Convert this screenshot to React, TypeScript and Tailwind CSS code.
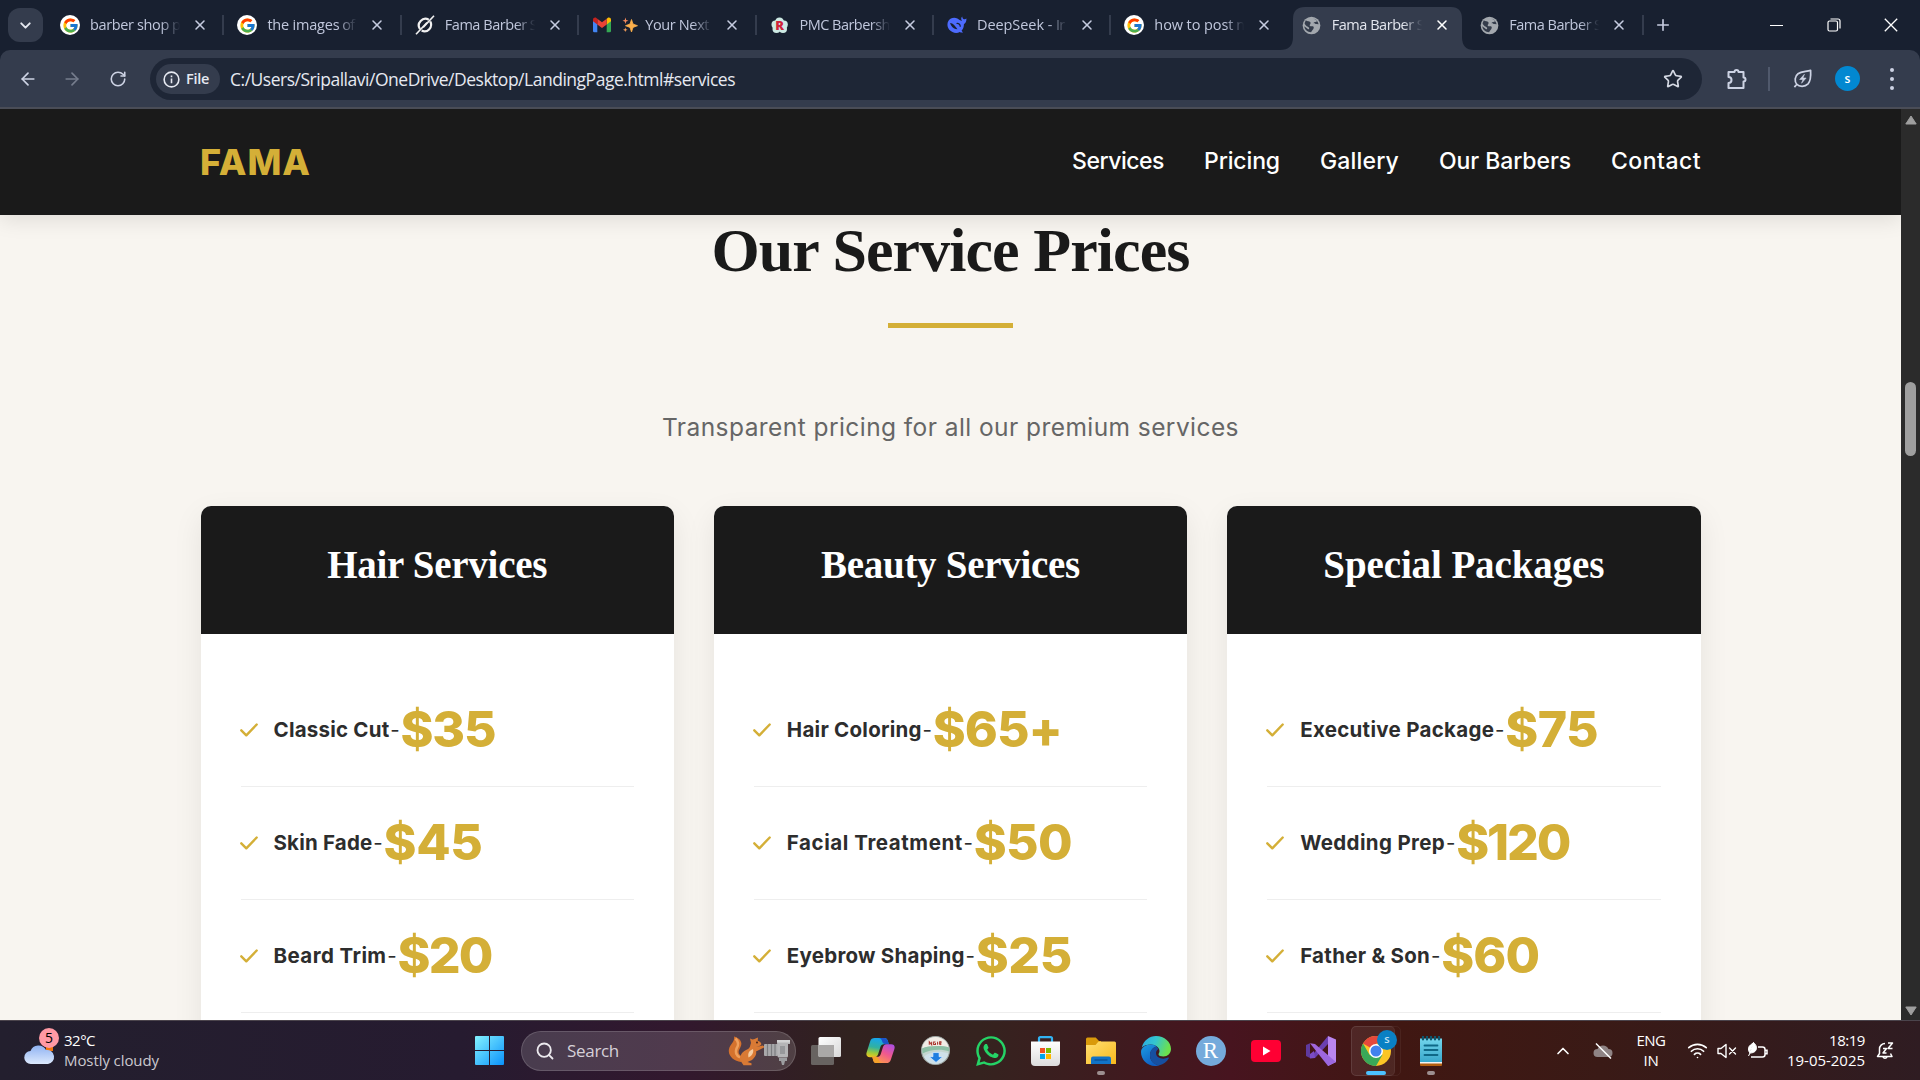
import React, { useLayoutEffect, useRef, useState } from "react";
import { FcGoogle } from "react-icons/fc";
import { FaWhatsapp } from "react-icons/fa";
import { Search, X, Plus, Star, ArrowLeft, ArrowRight, RotateCw, ChevronDown, ChevronUp, Wifi } from "lucide-react";

/** Spaces the letters of a line so that it measures `w` pixels. */
function Fit({ w, className = "", children }: { w: number; className?: string; children: string }) {
  const ref = useRef<HTMLSpanElement>(null);
  const [gap, setGap] = useState(0);
  useLayoutEffect(() => {
    const el = ref.current;
    if (!el) return;
    el.style.letterSpacing = "0px";
    const spacing = (w - el.getBoundingClientRect().width) / children.length;
    el.style.letterSpacing = `${spacing}px`;
    setGap(spacing);
  }, [w, children]);
  return (
    <span ref={ref} className={`inline-block whitespace-pre ${className}`} style={{ letterSpacing: `${gap}px` }}>
      {children}
    </span>
  );
}

/* ---------- favicons ---------- */
const GoogleIcon = () => (
  <span className="flex h-5 w-5 items-center justify-center rounded-full bg-white">
    <FcGoogle size={17} />
  </span>
);
const SlashIcon = () => (
  <svg viewBox="0 0 20 20" className="h-5 w-5" fill="none" stroke="#f1f1f1">
    <path d="M13.8 4.8A6.6 6.6 0 0 0 5 14.2M6.6 15.6A6.6 6.6 0 0 0 15.2 6.4" strokeWidth="2.2" />
    <path d="M19 .8 8.2 12.4" strokeWidth="1.6" />
    <path d="M1 19.3 12 7.6" strokeWidth="1.6" />
  </svg>
);
const GmailIcon = () => (
  <svg viewBox="0 0 20 16" className="h-4 w-5">
    <path d="M1 3v11a1.3 1.3 0 0 0 1.3 1.3h3V6.5z" fill="#4285f4" />
    <path d="M14.7 15.3h3A1.3 1.3 0 0 0 19 14V3l-4.3 3.5z" fill="#34a853" />
    <path d="M14.7 1.8v5.6L19 4.2V2.6C19 .9 17-.1 15.6 1z" fill="#fbbc04" />
    <path d="M5.3 7.4V1.8L10 5.3l4.7-3.5v5.6L10 11z" fill="#ea4335" />
    <path d="M1 2.6v1.6l4.3 3.2V1.8L4.4 1C3-.1 1 .9 1 2.6z" fill="#c5221f" />
  </svg>
);
const RIcon = () => (
  <span className="relative flex h-[17px] w-[17px] items-center justify-center text-[13px] leading-none font-extrabold text-[#d0243a]">
    <svg viewBox="0 0 17 17" className="absolute inset-0 h-[17px] w-[17px]" fill="#cdeae4">
      <circle cx="8.500" cy="5" r="4.500" />
      <circle cx="4.500" cy="7.500" r="4" />
      <circle cx="12.800" cy="7.500" r="4" />
      <circle cx="5.500" cy="12" r="4" />
      <circle cx="12" cy="12" r="4" />
    </svg>
    <span className="relative">R</span>
  </span>
);
const WhaleIcon = () => (
  <svg viewBox="0 0 20 18" className="h-[18px] w-5" fill="#4d6bfe">
    <path d="M19.4 2.6c-1 .9-2 .9-3 .5-.8-.6-1-1.400-1.200-2.500-1.300 1.300-1.300 2.800-.2 4.500-1.700-.3-3-1.600-4.600-2.500C6.800.9 3.200 2.400 1.500 4.700-.2 7.400.2 11.200 2.300 13.800c2.800 3.200 7.400 3.900 10.500 2.200 1 .6 2.200.7 3.300.4-.8-.5-1.300-1-1.500-1.800 1.700-1.900 2.300-4 2.300-6.400 1.800-1.100 2.700-3 2.500-5.600z" />
    <path d="M3 7c3.200.2 5.200 3 7.400 6.200l-1.800-.2C6 12.300 4.200 10.500 3 7z" fill="#182030" />
    <path d="M9.500 7.500c2-.6 3.800.9 3.800 3.200" stroke="#182030" strokeWidth="1.200" fill="none" />
  </svg>
);
const GlobeIcon = () => (
  <svg viewBox="0 0 20 20" className="h-[19px] w-[19px]">
    <circle cx="10" cy="10" r="9.300" fill="#a3a8ae" />
    <path d="M4 4.500C6 6 8.500 5 9 7c.3 1.700-1.500 2-.8 3.200.8 1.200 3-.2 4 1.200.8 1.300-.6 2.800-2.700 5.600C6 17 2.800 14.500 2.400 10.800L6.500 14c1.400.3 1.500-2-.3-2.700C4.500 10.500 3 9 2.700 7.500zM11.500 2.500c1.700.3 3.400 1.400 4.400 2.700-1 1.300-3 .6-3.600 2-.3 1 1.500 1.300 3 1.200l2.200.4c-.6-3.500-3-6-6-6.300z" fill="#343c4b" />
  </svg>
);
const Sparkles = () => (
  <svg viewBox="0 0 16 16" className="mr-[7px] h-4 w-4 shrink-0">
    <path d="M9.500 2.500 11 7l4.500 1.700L11 10.400 9.500 15 8 10.400 3.500 8.700 8 7z" fill="#fdb04b" stroke="#fdb04b" strokeWidth=".8" />
    <path d="M3.500.5 4.200 3l2.300.8-2.300.8-.7 2.400-.8-2.400L.5 3.800 2.700 3z" fill="#f78b5c" />
    <path d="m3.300 10.500.6 1.700 1.700.6-1.700.6-.6 1.700-.6-1.700-1.700-.6 1.700-.6z" fill="#f9a05a" />
  </svg>
);

/* ---------- tab strip ---------- */
type TabData = { icon: React.ReactNode; text: string; w: number; rest: string; active?: boolean; sparkle?: boolean; sep?: boolean };
const tabs: TabData[] = [
  { icon: <GoogleIcon />, text: "barber shop", w: 79, rest: " p", sep: true },
  { icon: <GoogleIcon />, text: "the images", w: 72, rest: " of", sep: true },
  { icon: <SlashIcon />, text: "Fama Barber", w: 82, rest: " S", sep: true },
  { icon: <GmailIcon />, text: "Your Next", w: 64, rest: "", sparkle: true, sep: true },
  { icon: <RIcon />, text: "PMC Barbers", w: 82, rest: "h", sep: true },
  { icon: <WhaleIcon />, text: "DeepSeek - ", w: 79, rest: "Ir", sep: true },
  { icon: <GoogleIcon />, text: "how to post", w: 79, rest: " n" },
  { icon: <GlobeIcon />, text: "Fama Barber", w: 82, rest: " S", active: true },
  { icon: <GlobeIcon />, text: "Fama Barber", w: 82, rest: " S", sep: true },
];

function Tab({ t }: { t: TabData }) {
  return (
    <div className="relative flex h-full w-[177.4px] shrink-0 items-center">
      {t.active && (
        <svg viewBox="0 0 194 43" className="absolute bottom-0 -left-[9px] h-[43px] w-[194px]">
          <path d="M0 43Q13 43 13 30V12Q13 0 25 0H171Q182 0 182 12V30Q182 43 194 43Z" fill="#343c4d" />
        </svg>
      )}
      <div className="relative ml-[13px] flex w-5 justify-center">{t.icon}</div>
      <div
        className={`relative ml-[10px] flex w-[93px] items-center text-[14.500px] whitespace-pre [mask-image:linear-gradient(to_right,black_76%,transparent_97%)] ${t.active ? "text-[#e3e6ee]" : "text-[#c0c7dc]"}`}
      >
        {t.sparkle && <Sparkles />}
        <Fit w={t.w} className="shrink-0">{t.text}</Fit>
        {t.rest && <span className="tracking-[-0.800px]">{t.rest}</span>}
      </div>
      <X size={16} strokeWidth={2.300} className={`relative ml-[9px] ${t.active ? "text-white" : "text-[#c6cce0]"}`} />
      {t.sep && <div className="ml-auto h-5 w-[2px] bg-[#343c4d]" />}
    </div>
  );
}

function TabStrip() {
  return (
    <div className="flex h-[50px] items-center bg-[#182030]">
      <div className="ml-2 flex h-[34px] w-[35px] items-center justify-center rounded-[12px] bg-[#343c4d] text-[#e4e7ef]">
        <ChevronDown size={17} strokeWidth={2.700} />
      </div>
      <div className="ml-1 flex h-full">
        {tabs.map((t, i) => (
          <Tab key={i} t={t} />
        ))}
      </div>
      <Plus size={18} strokeWidth={2.200} className="ml-[10px] text-[#c6cce0]" />
      <div className="mr-[1px] ml-auto flex items-center text-white">
        <div className="flex w-[57px] justify-center">
          <div className="h-[1px] w-[13px] bg-white" />
        </div>
        <div className="flex w-[57px] justify-center">
          <svg viewBox="0 0 14 14" className="h-[14px] w-[14px]" fill="none" stroke="#fff" strokeWidth="1.200">
            <rect x="1" y="3" width="9.500" height="10" rx="1.500" />
            <path d="M3.500 1h7.500a2 2 0 0 1 2 2v7.500" />
          </svg>
        </div>
        <div className="flex w-[57px] justify-center">
          <svg viewBox="0 0 14 14" className="h-[14px] w-[14px]" stroke="#fff" strokeWidth="1.300">
            <path d="m.8.8 12.400 12.400M13.200.8.8 13.200" />
          </svg>
        </div>
      </div>
    </div>
  );
}

function Toolbar() {
  return (
    <div className="h-[59px] bg-[#182030]">
      <div className="flex h-full items-center rounded-t-[10px] border-b-2 border-[#4a4d57] bg-[#343c4d] text-[#cdd3e4]">
        <ArrowLeft size={20} className="ml-[18px]" strokeWidth={2} />
        <ArrowRight size={20} className="ml-[24px] text-[#767d8d]" strokeWidth={2} />
        <RotateCw size={18} className="ml-[27px]" strokeWidth={2.100} />
        <div className="mt-[1px] ml-[23px] flex h-[42px] w-[1552px] items-center rounded-full bg-[#1e2636] pl-[6px]">
          <div className="flex h-[30px] w-[64px] items-center rounded-full bg-[#343c4d] pl-[7px] text-[#e6e9f1]">
            <svg viewBox="0 0 18 18" className="h-[17px] w-[17px]" fill="none" stroke="currentColor" strokeWidth="1.700">
              <circle cx="9" cy="9" r="7.800" />
              <path d="M9 8v5M9 4.800v1.800" />
            </svg>
            <Fit w={23} className="ml-[6px] text-[14.500px] font-semibold">File</Fit>
          </div>
          <Fit w={505} className="ml-[10px] text-[17.500px] text-[#e6e9f1]">C:/Users/Sripallavi/OneDrive/Desktop/LandingPage.html#services</Fit>
          <Star size={20} className="mr-[19px] ml-auto text-[#d5d9e4]" strokeWidth={2} />
        </div>
        <svg viewBox="0 0 22 22" className="ml-[24px] h-[22px] w-[22px]" fill="none" stroke="currentColor" strokeWidth="2" strokeLinejoin="round">
          <path d="M2.500 4H8.500a2 2 0 0 1 4 0H17.500V9.500a2 2 0 0 1 0 4V20H2.500V15a3 3 0 0 0 0-6z" />
        </svg>
        <div className="ml-[20px] h-[24px] w-[2px] bg-[#50596c]" />
        <svg viewBox="0 0 22 22" className="ml-[22px] h-[21px] w-[21px]" fill="none" stroke="currentColor" strokeWidth="1.800" strokeLinejoin="round">
          <path d="M19.500 2.500c.4 7 .2 11-2.700 14.200-3.300 3.400-9.300 3.200-11.800.3C2.400 13.900 2.800 8.600 6.300 6 10 3.200 14.500 4 19.500 2.500zM5.300 16.700 2.500 20" />
          <path d="M13 6.500 8 12h3.500l-1.500 4 4.800-5.500h-3.300z" fill="currentColor" strokeWidth=".6" />
        </svg>
        <div className="ml-[22px] flex h-[25px] w-[25px] items-center justify-center rounded-full bg-[#0288d1] text-[12px] font-semibold text-white">s</div>
        <div className="ml-[30px] flex flex-col gap-[5px]">
          <div className="h-[4px] w-[4px] rounded-full bg-[#cdd3e4]" />
          <div className="h-[4px] w-[4px] rounded-full bg-[#cdd3e4]" />
          <div className="h-[4px] w-[4px] rounded-full bg-[#cdd3e4]" />
        </div>
      </div>
    </div>
  );
}

/* ---------- page ---------- */
const cards = [
  {
    title: "Hair Services", tw: 220,
    items: [
      { name: "Classic Cut", w: 116, price: "$35", pw: 95 },
      { name: "Skin Fade", w: 99, price: "$45", pw: 99 },
      { name: "Beard Trim", w: 113, price: "$20", pw: 94 },
    ],
  },
  {
    title: "Beauty Services", tw: 259,
    items: [
      { name: "Hair Coloring", w: 135, price: "$65+", pw: 129 },
      { name: "Facial Treatment", w: 176, price: "$50", pw: 98 },
      { name: "Eyebrow Shaping", w: 178, price: "$25", pw: 96 },
    ],
  },
  {
    title: "Special Packages", tw: 281,
    items: [
      { name: "Executive Package", w: 194, price: "$75", pw: 93 },
      { name: "Wedding Prep", w: 145, price: "$120", pw: 113 },
      { name: "Father & Son", w: 130, price: "$60", pw: 98 },
    ],
  },
];
const nav = [
  { text: "Services", w: 92 },
  { text: "Pricing", w: 76 },
  { text: "Gallery", w: 79 },
  { text: "Our Barbers", w: 132 },
  { text: "Contact", w: 90 },
];

function Page() {
  return (
    <div className="flex h-[911px] overflow-hidden">
      <div className="flex w-[1901px] flex-col overflow-hidden bg-[#f8f5f0] font-['Inter',sans-serif]">
        <header className="z-10 flex h-[106px] shrink-0 items-center justify-between bg-[#1a1a1a] pr-[200px] pl-[200px] shadow-[0_5px_20px_rgba(0,0,0,0.1)]">
          <Fit w={111} className="text-[36px] font-extrabold text-[#d4af37]">FAMA</Fit>
          <nav className="-mt-[2px] flex gap-[40px] text-[23px] font-medium text-white">
            {nav.map((n) => (
              <Fit key={n.text} w={n.w}>{n.text}</Fit>
            ))}
          </nav>
        </header>
        <div className="flex h-[290px] shrink-0 flex-col items-center">
          <h2 className="mt-[3px] font-['Liberation_Serif',serif] text-[62px] leading-[64px] font-bold text-[#1a1a1a]">
            <Fit w={478}>Our Service Prices</Fit>
          </h2>
          <div className="mt-[41px] h-[5px] w-[125px] bg-[#d4af37]" />
          <p className="mt-[81px] text-[24.500px] leading-[36px] text-[#666]">
            <Fit w={577}>Transparent pricing for all our premium services</Fit>
          </p>
        </div>
        <div className="grid h-[700px] shrink-0 grid-cols-3 gap-[40px] px-[200.5px]">
          {cards.map((c) => (
            <div key={c.title} className="mt-[1px] overflow-hidden rounded-[10px] bg-white shadow-[0_10px_30px_rgba(0,0,0,0.08)]">
              <div className="flex h-[128px] items-start justify-center bg-[#1a1a1a] pt-[36px] font-['Liberation_Serif',serif] text-[39px] leading-[46px] font-bold text-white">
                <Fit w={c.tw}>{c.title}</Fit>
              </div>
              <ul className="px-[40px] pt-[40px] text-[20.500px] text-[#2d2d2d]">
                {c.items.map((it) => (
                  <li key={it.name} className="flex h-[113px] items-center border-b border-[#eee]">
                    <div className="w-[33px] shrink-0">
                      <svg viewBox="0 0 18 14" className="-ml-[1px] h-[14px] w-[18px]" fill="none" stroke="#d4af37" strokeWidth="2.400" strokeLinecap="round" strokeLinejoin="round">
                        <path d="m1.300 7.300 5 5L16.700 1.500" />
                      </svg>
                    </div>
                    <Fit w={it.w} className="font-bold">{it.name}</Fit>
                    <span className="w-[11px] text-center">-</span>
                    <Fit w={it.pw} className="-mt-[2px] text-[50px] font-extrabold text-[#d4af37]">{it.price}</Fit>
                  </li>
                ))}
              </ul>
            </div>
          ))}
        </div>
      </div>
      <div className="flex w-[19px] flex-col items-center bg-[#2b2b2b]">
        <svg viewBox="0 0 12 10" className="mt-[6px] h-[10px] w-[12px]"><path d="M6 1 11.200 9H.8z" fill="#9f9f9f" stroke="#9f9f9f" strokeLinejoin="round" /></svg>
        <div className="mt-[257px] h-[74px] w-[11px] rounded-full bg-[#9f9f9f]" />
        <svg viewBox="0 0 12 10" className="mt-auto mb-[4px] h-[10px] w-[12px]"><path d="M6 9 .8 1h10.400z" fill="#9f9f9f" stroke="#9f9f9f" strokeLinejoin="round" /></svg>
      </div>
    </div>
  );
}

/* ---------- taskbar icons ---------- */
const WindowsLogo = () => (
  <svg viewBox="0 0 29 29" className="h-[29px] w-[29px]">
    <defs>
      <linearGradient id="win" x1="0" y1="0" x2="1" y2="1"><stop offset="0" stopColor="#84f2ff" /><stop offset="1" stopColor="#0a92fb" /></linearGradient>
    </defs>
    <path d="M1 0h13v14H0V1a1 1 0 0 1 1-1zM15 0h13a1 1 0 0 1 1 1v13H15zM0 15h14v14H1a1 1 0 0 1-1-1zM15 15h14v13a1 1 0 0 1-1 1H15z" fill="url(#win)" />
  </svg>
);
const Squirrel = () => (
  <svg viewBox="0 0 62 32" className="h-[32px] w-[62px]">
    <path d="M13 27C6 26-.5 21 1 14c1-5 6-7 5-12.500 6 1.500 9 6 6.500 10.500-2 4-3.500 6 1.500 10z" fill="#d5722d" />
    <path d="M7.500 3.500c3.500 3.500 3 7 1 10-1.500 4-.5 7 3.500 9" stroke="#f0a05c" strokeWidth="2.500" fill="none" />
    <path d="M12 25c-.5-5 3-9 7-10.500 3.500-1.500 3-4 4-6.500l-1-4.500L24.500 4.500l2-.5L30 2.500l-.3 3.200c2.500.8 4 2.300 3.500 3.800-.8 1.600-3 1.600-5 2.500l6.500-1.500 2.300 1.500-9 4.500c1 3-1 6-4 8.500l-4.500 2 4 1.200v2h-8z" fill="#d97a35" />
    <path d="M25 14c1 3.500-1 7-4.500 8.500-1-4 .5-7 4.500-8.500z" fill="#f5cda2" />
    <circle cx="29" cy="7.500" r=".9" fill="#3a1c10" />
    <rect x="36" y="9" width="14" height="12" rx="1" fill="#a9a9ab" />
    <path d="M39.500 9v12M43.500 9v12M47 9v12" stroke="#7c7d80" strokeWidth="1.200" />
    <path d="M49 5h12a1 1 0 0 1 1 1v3h-2v12a1.500 1.500 0 0 1-1.500 1.500H51A1.500 1.500 0 0 1 49.500 21z" fill="#b5b5b7" />
    <path d="M49 5h13v2.500H49z" fill="#d2d2d3" />
    <path d="M52 11h5v8h-5z" fill="#97989b" />
    <path d="M51 23h8v3h-2l-1 4h-2l-1-4h-2z" fill="#9c9da0" />
  </svg>
);
const TaskView = () => (
  <svg viewBox="0 0 30 28" className="h-[28px] w-[30px]">
    <defs><linearGradient id="tv" x1="0" y1="0" x2="1" y2="1"><stop offset="0" stopColor="#fff" /><stop offset="1" stopColor="#d8d8d8" /></linearGradient></defs>
    <rect y="8" width="23" height="20" rx="1.500" fill="#686361" />
    <rect x="7.500" width="22.500" height="20" rx="1.500" fill="url(#tv)" />
    <path d="M7.500 8H23v12H9a1.500 1.500 0 0 1-1.500-1.500z" fill="#aaa8a7" />
  </svg>
);
const Copilot = () => (
  <svg viewBox="0 0 30 28" className="h-[27px] w-[29px]">
    <defs>
      <linearGradient id="cpa" x1=".3" y1="0" x2=".1" y2="1"><stop offset="0" stopColor="#17a6ea" /><stop offset=".45" stopColor="#31b1a0" /><stop offset=".75" stopColor="#9fca3a" /><stop offset="1" stopColor="#f8c419" /></linearGradient>
      <linearGradient id="cpb" x1=".9" y1="0" x2=".3" y2="1"><stop offset="0" stopColor="#a94de5" /><stop offset=".5" stopColor="#f0588f" /><stop offset="1" stopColor="#ff9a4b" /></linearGradient>
    </defs>
    <path d="M9 1h10c2 0 3 1 3.600 3l1 3.500h-5c-2 0-3.200 1-3.800 3L12.500 18c-.7 2-2 3-4 3H4c-3 0-4.300-2-3.400-5L4.300 4.500C5 2 6.500 1 9 1z" fill="url(#cpa)" />
    <path d="M17 1h2c2 0 3 1 3.600 3l1 3.500H20c-2 0-3-1.500-3.500-3.500S15 1 13 1z" fill="#1c53c9" />
    <path d="M21 27H11c-2 0-3-1-3.600-3L6.500 20.500h5c2 0 3.200-1 3.800-3l2.200-7c.6-2 2-3 4-3H26c3 0 4.300 2 3.400 5L25.700 23.500C25 26 23.500 27 21 27z" fill="url(#cpb)" />
    <path d="M6.400 20.500H10c2 0 3 1.500 3.500 3.500S15 27 17 27h-6c-2 0-3-1-3.600-3z" fill="#f5a12a" />
  </svg>
);
const Disc = () => (
  <svg viewBox="0 0 28 28" className="h-[29px] w-[29px]">
    <circle cx="14" cy="14" r="13.500" fill="#c5d6d0" stroke="#9da4a2" />
    <path d="M1 12C2 5 8 1 14 1s11.500 4 12.700 10C20 9 8 9 1 12z" fill="#f1ece6" />
    <path d="M1 12c6-3 20-3 26-1l.3 4C20 12 8 13 1.500 17z" fill="#8dbfa5" />
    <path d="M3 20C8 15 19 14 26.500 17c-2 6-6.500 10-12.500 10S5 24 3 20z" fill="#cfe0e8" />
    <path d="M8 8.500v-3l2.300 3v-3M14 5.700h-1.800v2.600H14V6.800M16 5.500v3M18 8.500v-3h1.300v1.300L18 7l1.500 1.500" stroke="#a8322a" strokeWidth="1" fill="none" />
    <path d="M11.500 16h6v4H21L14.500 25.500 8 20h3.500z" fill="#1f7de0" stroke="#dff0ff" strokeWidth=".7" />
  </svg>
);
const Store = () => (
  <svg viewBox="0 0 29 30" className="h-[30px] w-[29px]">
    <defs><linearGradient id="st" x1="0" y1="0" x2="0" y2="1"><stop offset="0" stopColor="#fff" /><stop offset="1" stopColor="#dcdcdc" /></linearGradient></defs>
    <path d="M8 6V2.500A1.200 1.200 0 0 1 9.200 1.200h10.600A1.200 1.200 0 0 1 21 2.500V6" fill="none" stroke="#31b2f2" strokeWidth="2.200" />
    <path d="M0 5.500h29V26a4 4 0 0 1-4 4H4a4 4 0 0 1-4-4z" fill="url(#st)" />
    <path d="M9 12h5v5H9z" fill="#f25022" /><path d="M15 12h5v5h-5z" fill="#7fba00" />
    <path d="M9 18h5v5H9z" fill="#00a4ef" /><path d="M15 18h5v5h-5z" fill="#ffb900" />
  </svg>
);
const Folder = () => (
  <svg viewBox="0 0 30 28" className="h-[28px] w-[30px]">
    <defs><linearGradient id="fo" x1="0" y1="0" x2="1" y2="1"><stop offset="0" stopColor="#ffdf73" /><stop offset="1" stopColor="#f8b91c" /></linearGradient></defs>
    <path d="M0 2a1.500 1.500 0 0 1 1.500-1.500h8.200L13 4H15v6H0z" fill="#d99a0b" />
    <path d="M0 8h9.500l3-3.500H28.500A1.500 1.500 0 0 1 30 6v21H0z" fill="url(#fo)" />
    <path d="M5 27v-5.500A2 2 0 0 1 7 19.500h16a2 2 0 0 1 2 2V27z" fill="#1173c7" />
    <path d="M8.500 23h13" stroke="#0b4f94" strokeWidth="1.300" />
  </svg>
);
const Edge = () => (
  <svg viewBox="0 0 30 30" className="h-[30px] w-[30px]">
    <defs>
      <linearGradient id="ed1" x1="0" y1="0" x2="1" y2=".3"><stop offset="0" stopColor="#2aa7e4" /><stop offset=".5" stopColor="#34c6cf" /><stop offset="1" stopColor="#6be04e" /></linearGradient>
      <linearGradient id="ed2" x1="0" y1="0" x2=".6" y2="1"><stop offset="0" stopColor="#1b9de2" /><stop offset="1" stopColor="#0f5cc0" /></linearGradient>
    </defs>
    <path d="M.8 11.500C2.500 4.500 8.500 0 15 0c8.500 0 15 6 15 13 0 4.500-3.500 7.500-7.500 7.500-3 0-5-1-5-2.300 0-.8 1-1.300 1-3.200 0-3.500-4-6.500-8.500-6.500C6 8.500 2.600 9.600.8 11.500z" fill="url(#ed1)" />
    <path d="M10 8.500C4.500 8.500 0 11.500 0 16c0 7.500 6 14 14 14 1.500 0 3.500-.3 4.500-.8C12 28.500 9 24 9 19.500 9 15 12 11.500 15.500 10.500 14 9 12 8.500 10 8.500z" fill="url(#ed2)" />
    <path d="M15.500 10.500C11.500 11 9 15 9 19.500c0 5 3.500 9.600 9.500 9.700 4-.9 7.300-3.500 9.300-7 .3-.5-.2-.9-.8-.6-4.500 2.200-12 1-12-4.600 0-1.800 1-3 2.500-4z" fill="#164fa0" />
  </svg>
);
const VisualStudio = () => (
  <svg viewBox="0 0 30 30" className="h-[30px] w-[30px]">
    <defs><linearGradient id="vs" x1="0" y1="0" x2="1" y2="1"><stop offset="0" stopColor="#a266dc" /><stop offset="1" stopColor="#9a68e0" /></linearGradient></defs>
    <path d="M0 9 4 7.200V22L0 20z" fill="#5f3a9e" />
    <path d="M4 22 22 0v8L9 22z" fill="#6b3fb0" />
    <path d="M22 0 30 3.500V26l-8 4z" fill="#ba86f0" />
    <path d="M4 7.200 9 8l21 18-8 4z" fill="url(#vs)" />
    <path d="M9 22 4 22.500V18l4-3z" fill="#7b4cc4" />
  </svg>
);
const Chrome = () => (
  <svg viewBox="0 0 30 30" className="h-[30px] w-[30px]">
    <circle cx="15" cy="15" r="15" fill="#fbc116" />
    <path d="M15 15 2 7.500A15 15 0 0 1 28 7.500H15z" fill="#e33b2e" />
    <path d="M2 7.500A15 15 0 0 0 15 30l6.500-11.300L8.500 18.700z" fill="#2ba24c" />
    <circle cx="15" cy="15" r="7" fill="#fff" />
    <circle cx="15" cy="15" r="5.500" fill="#3478ec" />
  </svg>
);
const Notepad = () => (
  <svg viewBox="0 0 22 30" className="h-[30px] w-[22px]">
    <defs><linearGradient id="np" x1="0" y1="0" x2="0" y2="1"><stop offset="0" stopColor="#72d5ec" /><stop offset="1" stopColor="#3aa8cc" /></linearGradient></defs>
    <path d="M0 24h22v5a1 1 0 0 1-1 1H1a1 1 0 0 1-1-1z" fill="#b35f10" />
    <path d="M0 24h22v3.500H0z" fill="#f3f3f3" />
    <path d="M0 2.500h22V26H0z" fill="url(#np)" />
    <path d="M3 .5v3M7 .5v3M11 .5v3M15 .5v3M19 .5v3" stroke="#0c566e" strokeWidth="2.200" strokeLinecap="round" />
    <path d="M4.500 9.500h13M4.500 14h13M4.500 19h13" stroke="#0f6887" strokeWidth="1.800" strokeLinecap="round" />
  </svg>
);

const Cell = ({ children, dot }: { children: React.ReactNode; dot?: boolean }) => (
  <div className="relative flex h-[60px] w-[55px] shrink-0 items-center justify-center">
    {children}
    {dot && <div className="absolute bottom-[6px] h-[4px] w-[8px] rounded-full bg-[#9d8f90]" />}
  </div>
);

function Taskbar() {
  return (
    <div className="flex h-[60px] items-center border-t border-[#4b444c] bg-[linear-gradient(90deg,#231f2e_0px,#261b30_460px,#32182e_680px,#31221f_850px,#35231f_980px,#47141f_1230px,#401712_1400px,#3a1a16_1600px,#2f1c22_1920px)] text-white">
      <div className="flex w-[462px] items-center pl-[24px]">
        <div className="relative h-[40px] w-[32px]">
          <svg viewBox="0 0 32 22" className="absolute bottom-[6px] left-0 h-[22px] w-[32px]">
            <defs><linearGradient id="cl" x1="0" y1="0" x2="0" y2="1"><stop offset="0" stopColor="#8fb2f2" /><stop offset="1" stopColor="#dce9fd" /></linearGradient></defs>
            <path d="M22 2h7v6h-7z" fill="#f0750f" />
            <path d="M7 21a6.500 6.500 0 0 1-.5-13A8.500 8.500 0 0 1 22 7a7 7 0 0 1 2 14z" fill="url(#cl)" />
          </svg>
          <div className="absolute -top-[3px] left-[15px] flex h-5 w-5 items-center justify-center rounded-full bg-[#ff99a4] text-[14px] text-black">5</div>
        </div>
        <div className="-mt-[2px] ml-[8px] flex flex-col items-start text-[15px] leading-5">
          <Fit w={31}>32°C</Fit>
          <Fit w={95} className="text-[#cbc8cf]">Mostly cloudy</Fit>
        </div>
      </div>
      <Cell><WindowsLogo /></Cell>
      <div className="ml-[4px] flex h-[40px] w-[275px] shrink-0 items-center rounded-full border border-white/15 bg-white/15 pl-[13px]">
        <Search size={20} strokeWidth={2.200} className="text-[#eceaee]" />
        <Fit w={52} className="ml-[12px] text-[17px] text-[#d6d0d8]">Search</Fit>
        <div className="mr-[5px] ml-auto"><Squirrel /></div>
      </div>
      <div className="ml-[2px] flex shrink-0">
        <Cell><TaskView /></Cell>
        <Cell><Copilot /></Cell>
        <Cell><Disc /></Cell>
        <Cell><FaWhatsapp size={34} color="#25d366" /></Cell>
        <Cell><Store /></Cell>
        <Cell dot><Folder /></Cell>
        <Cell><Edge /></Cell>
        <Cell>
          <div className="flex h-[30px] w-[30px] items-center justify-center rounded-full bg-[#75aadb] font-['Liberation_Serif',serif] text-[23px] leading-none text-white">R</div>
        </Cell>
        <Cell>
          <svg viewBox="0 0 30 22" className="h-[22px] w-[30px]"><rect width="30" height="22" rx="4" fill="#ff0033" /><path d="M12 6.500v9l7.500-4.500z" fill="#fff" /></svg>
        </Cell>
        <Cell><VisualStudio /></Cell>
        <Cell>
          <div className="absolute top-[5px] left-[3px] h-[50px] w-[50px] rounded-[5px] border border-white/5" />
          <div className="absolute top-[5px] left-[3px] h-[50px] w-[44px] rounded-[5px] border border-white/5 bg-white/7" />
          <Chrome />
          <div className="absolute top-[9px] left-[29px] flex h-5 w-5 items-center justify-center rounded-full bg-[#0a80c4] text-[11px] font-semibold text-[#bfe0f3]">s</div>
          <div className="absolute bottom-[6px] h-[4px] w-5 rounded-full bg-[#4cc2ff]" />
        </Cell>
        <Cell dot><Notepad /></Cell>
      </div>
      <div className="ml-[90px] flex shrink-0 items-center text-[15px] leading-5">
        <div className="flex w-[30px] justify-center"><ChevronUp size={20} strokeWidth={2} /></div>
        <div className="flex w-[50px] justify-center">
          <svg viewBox="0 0 20 18" className="h-[18px] w-[20px]">
            <path d="M4.500 15a4 4 0 0 1 0-8A6 6 0 0 1 15.500 7a4 4 0 0 1 0 8z" fill="#8f8485" />
            <path d="M3 1.500 18 16.500" stroke="#fff" strokeWidth="1.500" />
          </svg>
        </div>
        <div className="-mt-[2px] mr-[8px] flex w-[46px] flex-col items-center">
          <Fit w={29}>ENG</Fit>
          <Fit w={15}>IN</Fit>
        </div>
        <div className="flex w-[30px] justify-center"><Wifi size={21} strokeWidth={1.900} /></div>
        <div className="flex w-[30px] justify-center">
          <svg viewBox="0 0 20 16" className="h-[16px] w-[20px]" fill="none" stroke="#fff" strokeWidth="1.400" strokeLinejoin="round" strokeLinecap="round">
            <path d="M1 5.500h3L9 1.500v13L4 10.500H1zM12.500 5l6 6M18.500 5l-6 6" />
          </svg>
        </div>
        <div className="flex w-[30px] justify-center">
          <svg viewBox="0 0 21 18" className="h-[18px] w-[21px]" fill="none" stroke="#fff" strokeWidth="1.500">
            <path d="M11 5h4.500A2.500 2.500 0 0 1 18 7.500v5a2.500 2.500 0 0 1-2.500 2.500H4M18.500 8.300H20v3.400h-1.500" />
            <path d="M6.500.5c3 2.500 3.500 5 2.500 7.500-1 2.300-3.500 3-6 3l-1.500 3M6.500.5C5 2.500 1.500 3 1.500 7c0 1.500.5 3 1.500 4z" fill="#fff" strokeWidth="1" />
          </svg>
        </div>
        <div className="-mt-[2px] flex w-[93px] flex-col items-end">
          <Fit w={36}>18:19</Fit>
          <Fit w={78}>19-05-2025</Fit>
        </div>
        <svg viewBox="0 0 18 20" className="ml-[11px] h-[20px] w-[18px]" fill="none" stroke="#fff" strokeWidth="1.500" strokeLinejoin="round">
          <path d="M9 2.500A5.500 5.500 0 0 0 3.500 8v4.500L1.500 15.500h14.500l-1.500-3M7 16a2.200 2.200 0 0 0 4 0M7 7.500h3.500L7 12h3.500" />
          <path d="M12 2h4.500L12 7.500h4.500" />
        </svg>
      </div>
    </div>
  );
}

export default function App() {
  return (
    <div className="h-[1080px] w-[1920px] overflow-hidden font-['Open_Sans',sans-serif]">
      <TabStrip />
      <Toolbar />
      <Page />
      <Taskbar />
    </div>
  );
}
